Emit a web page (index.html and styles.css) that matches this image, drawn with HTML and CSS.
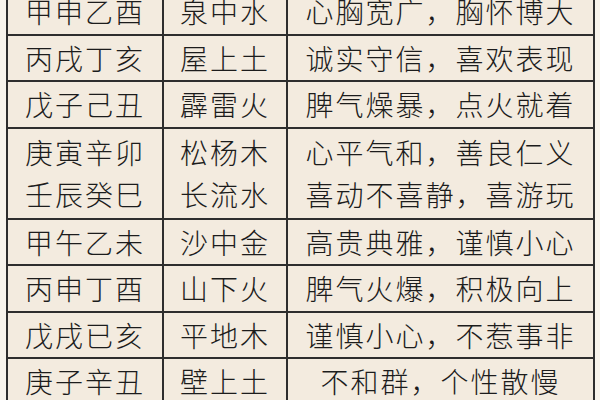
FILE: index.html
```html
<!DOCTYPE html>
<html lang="zh">
<head>
<meta charset="utf-8">
<link rel="stylesheet" href="styles.css">
</head>
<body>
<table class="nayin">
  <colgroup><col class="c1"><col class="c2"><col class="c3"></colgroup>
  <tbody>
    <tr><td>甲申乙酉</td><td>泉中水</td><td>心胸宽广，胸怀博大</td></tr>
    <tr><td>丙戌丁亥</td><td>屋上土</td><td>诚实守信，喜欢表现</td></tr>
    <tr><td>戊子己丑</td><td>霹雷火</td><td>脾气燥暴，点火就着</td></tr>
    <tr class="joined-top"><td>庚寅辛卯</td><td>松杨木</td><td>心平气和，善良仁义</td></tr>
    <tr class="joined-bottom"><td>壬辰癸巳</td><td>长流水</td><td>喜动不喜静，喜游玩</td></tr>
    <tr><td>甲午乙未</td><td>沙中金</td><td>高贵典雅，谨慎小心</td></tr>
    <tr><td>丙申丁酉</td><td>山下火</td><td>脾气火爆，积极向上</td></tr>
    <tr><td>戊戌已亥</td><td>平地木</td><td>谨慎小心，不惹事非</td></tr>
    <tr><td>庚子辛丑</td><td>壁上土</td><td>不和群，个性散慢</td></tr>
  </tbody>
</table>
</body>
</html>
```
FILE: styles.css
```css
html, body {
  margin: 0;
  padding: 0;
  background: #f8f4ec;
  overflow: hidden;
  width: 600px;
  height: 400px;
}

.nayin {
  margin: -13px 0 0 6px;
  width: 589px;
  table-layout: fixed;
  border-collapse: collapse;
  background: #f3ebdf;
  font-family: "Noto Sans CJK SC", "Noto Sans", sans-serif;
  font-weight: 300;
  font-size: 28px;
  color: #1c1c1c;
}

.c1 { width: 156px; }
.c2 { width: 124px; }

.nayin td {
  border: 2px solid #2e2e2e;
  height: 44.5px;
  padding: 0;
  text-align: center;
  vertical-align: middle;
  letter-spacing: 2px;
  line-height: 1;
  white-space: nowrap;
}

.nayin tr.joined-top td {
  border-bottom-style: hidden;
  vertical-align: bottom;
  padding-bottom: 7px;
  height: 37.5px;
}

.nayin tr.joined-bottom td {
  vertical-align: top;
  padding-top: 7px;
  height: 37.5px;
}
```
